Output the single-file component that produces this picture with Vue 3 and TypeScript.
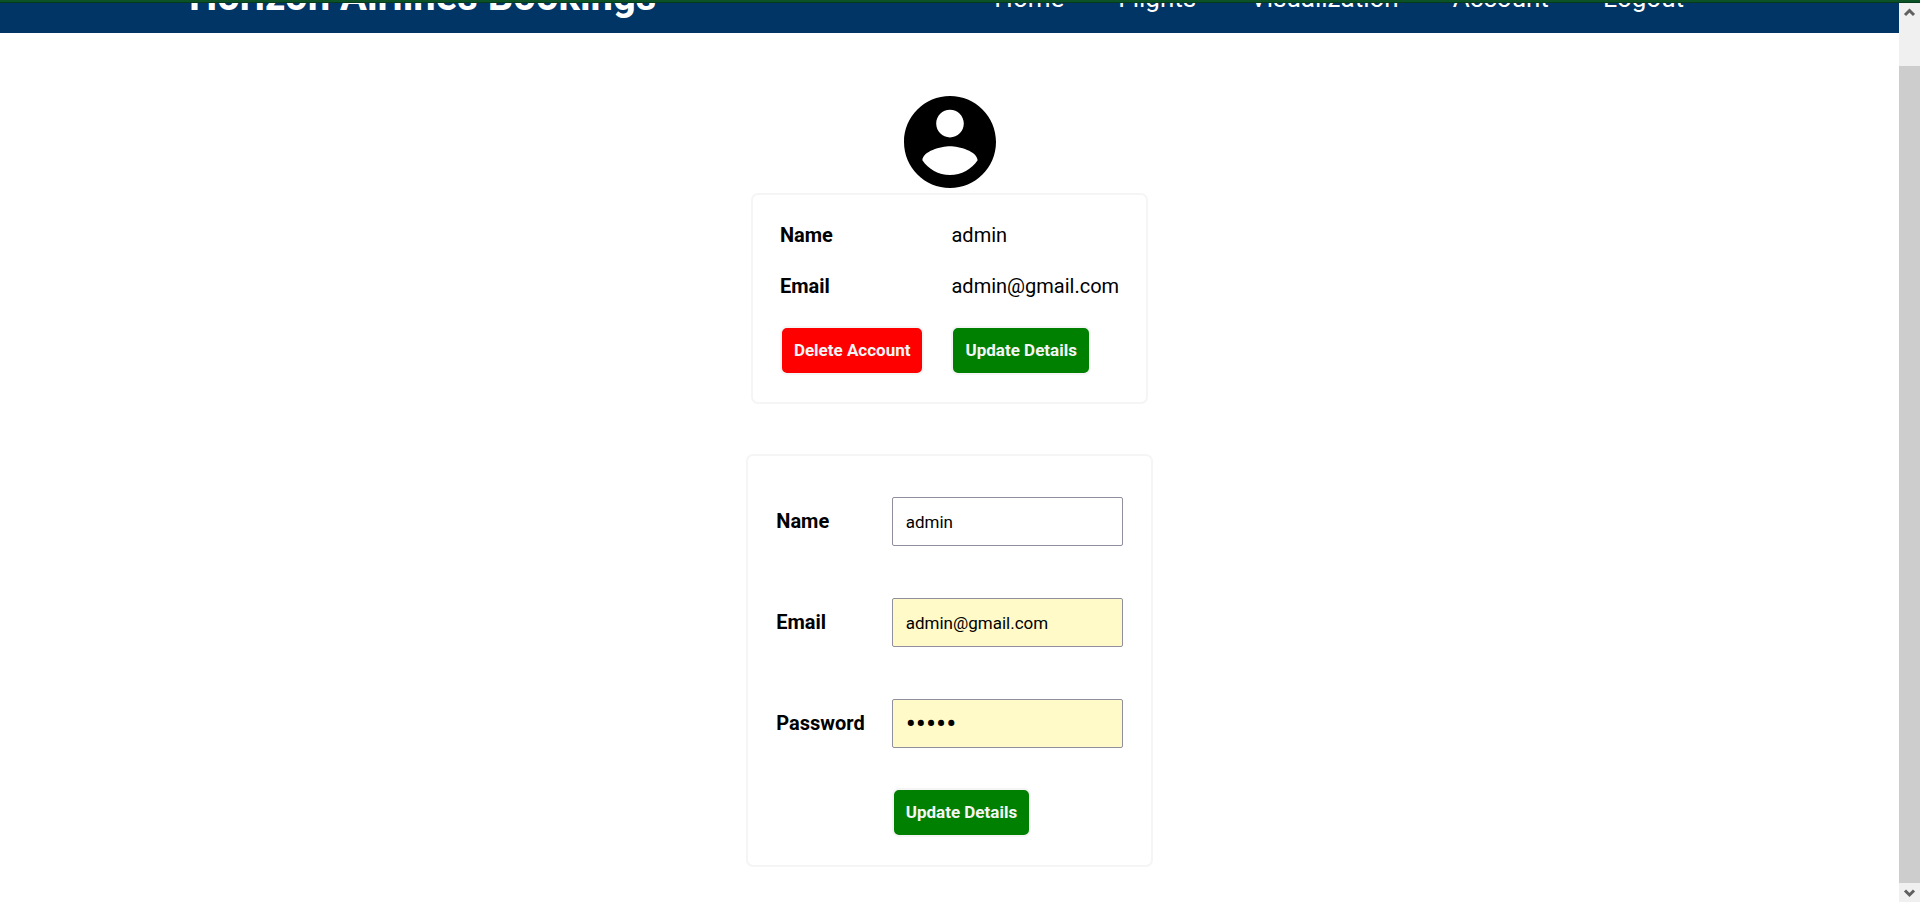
<script setup lang="ts">
import { ref } from 'vue'

interface Account {
  name: string
  email: string
  password: string
}

const links: string[] = ['Home', 'Flights', 'Visualization', 'Account', 'Logout']
const account = ref<Account>({ name: 'admin', email: 'admin@gmail.com', password: 'admin' })
const form = ref<Account>({ ...account.value })

function update(): void {
  account.value = { ...form.value }
}
</script>

<template>
  <div class="window">
    <div class="page">
      <header class="header">
        <h1 class="brand">Horizon Airlines Bookings</h1>
        <nav class="nav">
          <a v-for="link in links" :key="link" href="#">{{ link }}</a>
        </nav>
      </header>

      <main class="content">
        <svg class="avatar" viewBox="2 2 20 20" aria-hidden="true">
          <path
            fill-rule="evenodd"
            d="M12 2C6.48 2 2 6.48 2 12s4.48 10 10 10 10-4.48 10-10S17.52 2 12 2zm0 3c1.66 0 3 1.34 3 3s-1.34 3-3 3-3-1.34-3-3 1.34-3 3-3zm0 14.2c-2.5 0-4.71-1.28-6-3.22.03-1.99 4-3.08 6-3.08 1.99 0 5.97 1.09 6 3.08-1.29 1.94-3.5 3.22-6 3.22z"
          />
        </svg>

        <section class="card">
          <table class="details">
            <tbody>
              <tr>
                <th scope="row">Name</th>
                <td>{{ account.name }}</td>
              </tr>
              <tr>
                <th scope="row">Email</th>
                <td>{{ account.email }}</td>
              </tr>
              <tr>
                <td><button type="button" class="btn danger">Delete Account</button></td>
                <td><button type="button" class="btn">Update Details</button></td>
              </tr>
            </tbody>
          </table>
        </section>

        <form class="card edit" @submit.prevent="update">
          <div class="field">
            <label for="name">Name</label>
            <input id="name" v-model="form.name" type="text" />
          </div>
          <div class="field">
            <label for="email">Email</label>
            <input id="email" v-model="form.email" class="filled" type="email" />
          </div>
          <div class="field">
            <label for="password">Password</label>
            <input id="password" v-model="form.password" class="filled" type="password" />
          </div>
          <div class="submit">
            <button type="submit" class="btn">Update Details</button>
          </div>
        </form>
      </main>
    </div>

    <div class="scrollbar" aria-hidden="true">
      <svg class="arrow" viewBox="0 0 21 19"><path d="M6 12l4.5-4.5L15 12" /></svg>
      <div class="thumb"></div>
      <svg class="arrow" viewBox="0 0 21 19"><path d="M6 7.5l4.5 4.5L15 7.5" /></svg>
    </div>
  </div>
</template>

<style>
body {
  margin: 0;
  background: #fff;
}
</style>

<style scoped>
.window {
  box-sizing: border-box;
  display: grid;
  grid-template-columns: 1fr 21px;
  min-height: 100vh;
  border-top: 2px solid #0b5227;
  font-family: Roboto, "Liberation Sans", sans-serif;
  font-size: 20px;
  line-height: 23px;
  color: #000;
}

.header {
  box-sizing: border-box;
  display: flex;
  justify-content: space-between;
  align-items: flex-end;
  height: 31px;
  overflow: hidden;
  padding: 0 215px 13px 189px;
  border-top: 1px solid #053a1c;
  background: #003566;
  color: #fff;
}

.brand {
  margin: 0;
  font-size: 40px;
  line-height: 46px;
  font-weight: 700;
}

.nav {
  display: flex;
  gap: 54px;
  padding-bottom: 7px;
}

.nav a {
  color: #fff;
  font-size: 26px;
  line-height: 30px;
  text-decoration: none;
}

.content {
  display: flex;
  flex-direction: column;
  align-items: center;
  padding: 63px 0 35px;
}

.avatar {
  width: 92px;
  height: 92px;
  margin-bottom: 5px;
}

.card {
  padding: 15px 27px 13px;
  border: 2px solid #f5f5f5;
  border-radius: 7px;
}

.details {
  border-collapse: collapse;
}

.details th,
.details td {
  padding: 14px 0;
  text-align: left;
}

.details th,
.details td:first-child {
  padding-right: 27px;
}

.btn {
  display: block;
  padding: 12px;
  border: 2px solid #f5f5f5;
  border-radius: 7px;
  background: #008000;
  color: #f5f5f5;
  font-family: inherit;
  font-size: 17px;
  line-height: 21px;
  font-weight: 700;
}

.danger {
  background: #f00;
}

.edit {
  display: grid;
  grid-template-columns: auto 231px;
  column-gap: 27px;
  margin-top: 50px;
  padding: 15px 28px 14px;
}

.field {
  display: grid;
  grid-column: 1 / -1;
  grid-template-columns: subgrid;
  align-items: center;
  padding: 26px 0;
}

.field label {
  font-weight: 700;
}

.field input {
  box-sizing: border-box;
  width: 100%;
  height: 49px;
  padding: 0 13px;
  border: 1px solid #8f8f9d;
  border-radius: 2px;
  background: #fff;
  color: #000;
  font-family: inherit;
  font-size: 17px;
}

.field .filled {
  background: #fffac8;
}

.field input[type="password"] {
  font-size: 30px;
}

.submit {
  grid-column: 2;
  justify-self: start;
  padding: 14px 0;
}

.scrollbar {
  display: flex;
  flex-direction: column;
  border-top: 1px solid #053a1c;
  background: #f0f0f0;
}

.thumb {
  flex: 1;
  margin-top: 44px;
  background: #cdcdcd;
}

.arrow {
  width: 21px;
  height: 19px;
  fill: none;
  stroke: #606060;
  stroke-width: 3;
}
</style>
